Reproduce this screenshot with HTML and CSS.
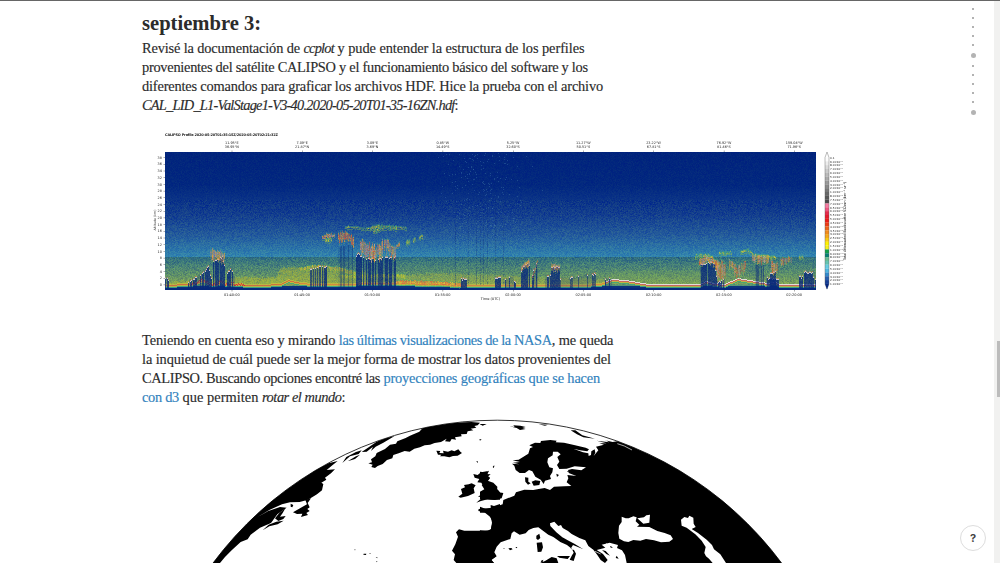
FILE: index.html
```html
<!DOCTYPE html>
<html lang="es">
<head>
<meta charset="utf-8">
<title>Bitácora</title>
<link rel="stylesheet" href="styles.css">
</head>
<body>
<main class="article">
  <h2 class="title">septiembre 3:</h2>
  <p class="para">
    <span class="line l1">Revisé la documentación de <em>ccplot</em><span class="rest"> y pude entender la estructura de los perfiles</span></span>
    <span class="line l2">provenientes del satélite CALIPSO y el funcionamiento básico del software y los</span>
    <span class="line l3">diferentes comandos para graficar los archivos HDF. Hice la prueba con el archivo</span>
    <span class="line l4"><em>CAL_LID_L1-ValStage1-V3-40.2020-05-20T01-35-16ZN.hdf</em>:</span>
  </p>
  <figure class="profile">
    <canvas id="plot" class="plot" width="651" height="138"></canvas>
    <svg id="axes" class="axes" viewBox="142 125 716 180" width="716" height="180"></svg>
  </figure>
  <p class="para second">
    <span class="line m1">Teniendo en cuenta eso y mirando <a>las últimas visualizaciones de la NASA</a>, me queda</span>
    <span class="line m2">la inquietud de cuál puede ser la mejor forma de mostrar los datos provenientes del</span>
    <span class="line m3">CALIPSO. Buscando opciones encontré las <a>proyecciones geográficas que se hacen</a></span>
    <span class="line m4"><a>con d3</a> que permiten <em>rotar el mundo</em>:</span>
  </p>
  <svg class="globe" viewBox="200 410 600 153" width="600" height="153">
    <defs><clipPath id="disc"><circle cx="497.3" cy="774.5" r="354.3"/></clipPath></defs>
    <g clip-path="url(#disc)">
      <g transform="translate(200 410) scale(.33333)">
        <path d="M20 470L60 459 75 441 95 421 122 396 143 388 152 374 180 353 213 339 232 313 260 293 240 291 205 303 173 321 208 300 246 283 270 277 299 276 324 269 351 253 366 241 370 222 364 218 379 209 375 203 393 190 405 178 380 180 398 165 413 153 385 160 350 177 300 207 240 246 215 262 180 280 90 360 10 440Z"/>
        <path d="M225 325L238 309 256 295 248 309 240 320 257 318 250 327 235 333ZM188 361L206 344 229 335 251 332 233 343 208 349ZM272 281L280 285 277 292 272 290ZM279 307L300 295 321 283 316 270 333 265 323 279 329 292 322 297 329 303 319 309 324 315 303 321 307 311 291 312Z"/>
        <path d="M232 265L280 227 330 195 380 170 335 201 290 230 248 258ZM427 159L439 141 468 126 485 121 476 132 450 139ZM443 154L468 139 480 134 465 147ZM485 126L506 112 530 95 555 85 584 78 550 98 527 110 513 123 519 110 500 125Z"/>
        <path d="M505 160L516 157 513 148 526 139 530 129 555 117 570 104 588 101 592 94 617 84 630 77 658 65 668 54 710 44 762 38 814 36 840 38 833 46 823 48 829 53 812 56 820 61 803 64 800 72 783 73 785 79 765 82 768 89 755 87 750 95 735 94 740 86 723 96 704 99 690 104 674 106 660 112 643 116 629 125 614 123 596 130 580 135 577 145 561 150 548 162 533 168 525 174 514 171 518 164Z"/>
        <path d="M709 122L721 123 718 129 731 130 729 122 744 125 755 121 763 124 775 118 781 125 786 129 773 137 759 138 748 142 733 139 720 139 724 134 714 134ZM840 43L857 42 845 45ZM838 88L845 88 840 92ZM829 154L833 153 833 160ZM878 171L883 165 881 174Z"/>
        <path d="M833 195L843 187 861 184 857 192 872 193 861 202 870 204 862 215 880 222 887 233 895 241 900 247 900 269 882 269 863 268 843 273 829 278 842 267 854 264 845 261 834 260 847 251 842 247 859 243 858 233 850 229 844 218 832 217 838 207 824 203 820 192ZM783 237L795 232 792 225 806 223 815 220 827 226 821 235 824 249 804 258 782 263 775 260 787 251Z"/>
        <path d="M900 282L882 288 872 285 872 294 860 295 836 297 835 303 849 306 862 309 873 323 876 338 872 361 835 362 793 362 777 358 768 367 774 380 766 403 756 422 765 433 761 450 769 459H882L874 449 888 439 876 424 886 410 900 396ZM464 417L467 420 464 421ZM491 431L499 431 498 435 490 434ZM509 429L513 430 509 432ZM527 441L532 442 532 445ZM528 454L532 454 531 457Z"/>
      </g>
      <g transform="translate(480 410) scale(.33333)">
        <path fill-rule="evenodd" d="M0 290L20 298 45 291 68 283 70 270 103 257 108 247 133 239 160 240 176 237 194 234 210 240 222 230 253 229 274 228 260 217 265 205 262 195 289 198 268 190 264 180 276 177 304 181 318 172 284 169 260 176 238 177 231 165 238 155 232 141 242 133 233 125 219 125 218 136 204 145 202 157 208 172 219 175 217 187 210 198 213 207 195 212 191 222 182 209 166 200 157 184 147 180 135 189 119 189 107 180 103 167 96 161 118 163 99 158 120 156 98 151 116 149 134 138 145 131 150 115 159 111 148 106 165 98 181 99 183 93 211 90 230 92 227 97 252 98 282 105 317 113 327 118 322 124 300 121 280 116 309 127 325 130 326 138 333 135 334 124 344 118 346 128 341 138 355 121 348 110 372 104 358 100 380 100 350 92 388 97 375 91 398 96 412 94 450 90 600 150 800 260 950 375 1100 540H0ZM0 308L15 308 30 320 38 335 33 357 21 364 0 361ZM50 410L62 397 91 387 95 370 102 364 119 374 137 370 146 360 160 354 175 352 187 361 205 374 220 381 241 396 261 405 276 417 281 428 276 436 269 449 281 453 288 431 282 420 272 416 279 405 310 418 283 401 266 392 247 382 229 367 211 348 210 340 223 335 235 348 243 345 248 354 264 363 275 372 298 384 316 391 325 408 340 419 352 435 362 450 375 459 383 450 369 432 350 420 376 413 365 404 389 398 414 405 411 414 426 421 435 435 440 459H235L230 445 215 441 195 453 180 459H42L34 450 50 439 43 427ZM425 320L437 325 446 325 460 319 470 322 467 334 478 344 471 350 508 351 532 363 554 369 572 376 579 387 568 395 543 397 522 391 498 387 481 392 460 390 445 396 432 394 418 386 415 369 417 347 425 336ZM472 325L492 322 499 316 510 314 508 338 490 341ZM603 329L613 321 624 324 628 317 640 323 641 341 647 351 635 357 654 369 680 389 696 405 702 418 721 433 738 459H698L687 446 678 439 673 429 677 411 665 392 646 373 620 353 605 347Z"/>
        <path d="M0 185L14 187 27 182 21 196 30 203 23 212 40 218 52 230 51 246 70 249 65 265 45 270 0 267V245L13 238 5 225 17 216 0 212ZM-1 42L20 42 8 47ZM88 49L104 51 100 46 121 47 137 51 127 54 137 57 120 60 110 54ZM176 43L204 44 195 47ZM272 61L286 61 307 76 345 86 310 82 291 73ZM135 202L145 203 145 215 152 220 144 224 136 215ZM155 215L166 211 181 213 178 225 161 227ZM229 191L237 195 231 201ZM260 184L273 184 270 190ZM169 377L178 371 181 384 174 390 169 386ZM170 398L186 397 189 412 184 425 173 426ZM85 415L94 414 98 418 90 421ZM106 411L112 411 110 415ZM70 415L74 415 72 418ZM231 438L270 438 263 447 238 443ZM366 420L377 423 390 437 379 432ZM410 437L416 446 407 444ZM390 408L399 412 392 414ZM182 453L190 449 187 460ZM41 169L44 170 39 173Z"/>
        <path class="shore" d="M412 101L433 108 456 120M357 81L382 93M150 200L158 209M205 214L206 225M379 400L430 456M345 424L362 432M60 455L76 451"/>
      </g>
    </g>
    <circle class="rim" cx="497.3" cy="774.5" r="354.3"/>
  </svg>
</main>
<nav class="outline"><i></i><i></i><i></i><i></i><i></i><b></b><i></i><i></i><i></i><i></i><i></i><b></b></nav>
<div class="scroll"><div class="thumb"></div></div>
<button class="help">?</button>
<script src="plot.js"></script>
</body>
</html>
```
FILE: styles.css
```css
* { box-sizing: border-box; }
html, body { height: 100%; overflow: hidden; }
body { margin: 0; background: #fff; color: #2b2b2b; border-top: 1px solid #666; font-family: "Source Serif Pro", "Liberation Serif", serif; }
.article { width: 716px; margin-left: 142px; }
.title { margin: 0; padding-top: 8px; height: 38px; font-size: 20.6px; line-height: 28px; font-weight: 700; }
.para { margin: 0; font-size: 14.4px; line-height: 19px; -webkit-text-stroke: .15px; }
.line { display: block; white-space: nowrap; }
.l1 { letter-spacing: -.15px; }
.l1 em { letter-spacing: -.75px; }
.rest { letter-spacing: -.08px; }
.l2 { letter-spacing: -.27px; }
.l3 { letter-spacing: -.18px; }
.l4 { letter-spacing: -.77px; }
.m1 { letter-spacing: -.11px; }
.m1 a { letter-spacing: -.38px; }
.m2 { letter-spacing: -.11px; }
.m3 { letter-spacing: -.34px; }
.m3 a { letter-spacing: -.17px; }
.m4 { letter-spacing: .02px; }
.m4 a { letter-spacing: -.3px; }
.m4 em { letter-spacing: -.45px; }
.para a { color: #3182bd; }
.profile { position: relative; margin: 10px 0 0; height: 180px; padding: 27px 0 0 23px; }
.plot { display: block; width: 651px; height: 138px; }
.axes { position: absolute; left: 0; top: 0; font-family: "DejaVu Sans", sans-serif; }
.second { padding-top: 26px; }
.globe { display: block; margin: 3px 0 0 58px; }
.rim { fill: none; stroke: #000; stroke-width: .8; }
.shore { fill: none; stroke: #fff; stroke-width: 2; }
.outline { position: absolute; left: 970px; top: 8px; width: 6px; display: flex; flex-direction: column; align-items: center; gap: 7px; }
.outline i { width: 2px; height: 2px; border-radius: 50%; background: #999; }
.outline b { width: 5px; height: 5px; border-radius: 50%; background: #b3b3b3; }
.scroll { position: absolute; right: 0; top: 1px; bottom: 0; width: 6px; background: #f1f1f0; padding: 340px 0 0 3px; }
.thumb { height: 56px; background: #bcbcbc; }
.help { position: absolute; left: 960px; top: 525px; width: 26px; height: 26px; padding: 0; border: 1px solid #ddd; border-radius: 50%; background: #fff; color: #444; font: bold 11px/24px Inter, sans-serif; }
```
FILE: plot.js
```js
const W = 651, H = 138, X0 = 165, Y0 = 152;
let seed = 7;
const rnd = () => (seed = (seed * 1664525 + 1013904223) >>> 0) / 4294967296;
const hex = s => [1, 3, 5].map(i => parseInt(s.substr(i, 2), 16));
const px = new Float32Array(W * H * 3);

function put(x, y, c, a = 1) {
  x = Math.round(x - X0); y = Math.round(y - Y0);
  if (x < 0 || y < 0 || x >= W || y >= H) return;
  const k = (y * W + x) * 3;
  for (let i = 0; i < 3; i++) px[k + i] += (c[i] - px[k + i]) * a;
}
function along(pts, x) {
  for (let i = 1; i < pts.length; i++) if (x <= pts[i][0]) {
    const [a, b] = pts[i - 1], [c, d] = pts[i];
    return b + (d - b) * (x - a) / (c - a);
  }
  return pts[pts.length - 1][1];
}
function ramp(stops, y) {
  for (let i = 1; i < stops.length; i++) if (y <= stops[i][0]) {
    const t = (y - stops[i - 1][0]) / (stops[i][0] - stops[i - 1][0]);
    const a = hex(stops[i - 1][1]), b = hex(stops[i][1]);
    return a.map((v, k) => v + (b[k] - v) * t);
  }
  return hex(stops[stops.length - 1][1]);
}

// Background atmosphere
const sky = [[152, '#00247c'], [185, '#02287f'], [215, '#143f8e'], [235, '#245b9b'], [256.4, '#3284ae'],
  [256.6, '#2f6d80'], [265, '#467f78'], [275, '#609168'], [283, '#7ca05a'], [287, '#2d8790'], [288, '#06297c'], [290, '#00206c']];
for (let y = Y0; y < Y0 + H; y++) {
  const c = ramp(sky, y), n = y < 200 ? 5 : y < 257 ? 12 : y < 285 ? 18 : 5;
  for (let x = X0; x < X0 + W; x++) {
    const r = (rnd() + rnd() - 1) * n * 1.4;
    put(x, y, [c[0] + r, c[1] + r * 1.2, c[2] - r * .3]);
  }
}
// Daylight speckle
for (let i = 0; i < 300; i++) put(485 + (rnd() + rnd() + rnd() - 1.5) * 42, 153 + rnd() * 105, hex('#4b85b0'), .35);
const navy = hex('#08297b'), white = hex('#eee5e5');
const green = ['#82b83e', '#d8cf30', '#4cac70', '#c9cb2c'].map(hex);
const hot = ['#dd6133', '#eb9d33', '#bfa28c', '#ce8778', '#d0a038'].map(hex);
const pick = a => a[Math.floor(rnd() * a.length)];

// Columns share a colour so that the echoes read as vertical streaks
function cloud(pts, thick, pal, density) {
  for (let x = pts[0][0]; x <= pts[pts.length - 1][0]; x++) {
    const h = thick * (.5 + rnd() * .8), y = along(pts, x) + (rnd() - .5) * thick * .35;
    const c = pick(pal), a = density + (1 - density) * rnd();
    put(x, y - h * .3 - 1, green[2], .4);
    for (let d = 0; d < h; d++) put(x, y + d - h * .3, rnd() < .65 ? c : pick(pal), a * (.45 + rnd() * .5));
    put(x, y + h * .7 + 1, green[0], .4);
  }
}
function towers(pts, density, cap = true, alpha = .9) {
  for (let x = pts[0][0]; x <= pts[pts.length - 1][0]; x++) {
    const full = rnd() < density;
    const y = along(pts, x) + rnd() * 2;
    const a = full ? alpha : alpha * .3;
    for (let q = y; q < 289; q++) put(x, q, navy, a * (.75 + rnd() * .25));
    if (cap && full) { put(x, y, white, .8); put(x, y - 1, pick(hot), .6); }
  }
}
function haze(top, bottom, color, a) {
  for (let x = top[0][0]; x <= top[top.length - 1][0]; x++)
    for (let y = along(top, x) + rnd() * 2; y < bottom; y++) put(x, y, hex(color), a * (.25 + rnd() * .75));
}
haze([[165, 281], [225, 279], [240, 276], [275, 277], [281, 267], [315, 266], [340, 268], [365, 271]], 285, '#b9bb2c', .6);
haze([[365, 273], [405, 274], [440, 272], [550, 277], [610, 279]], 285, '#a9b341', .5);
haze([[610, 270], [700, 270]], 284, '#80ac50', .25);
cloud([[300, 268], [315, 266], [338, 268], [356, 273]], 3, [hex('#d0c92c'), hex('#a5bd38'), hex('#d9b932')], .3);
cloud([[340, 276], [380, 275], [405, 275]], 3, [hex('#c9cb2c'), hex('#a5bd38')], .4);

// Ground echo
const ground = [[165, 285], [188, 284], [196, 283], [202, 280], [209, 284], [217, 284], [221, 281], [225, 284], [260, 285],
  [280, 284], [288, 280], [295, 282], [310, 284], [400, 283], [430, 284], [470, 285], [580, 285], [600, 284], [612, 280],
  [626, 281], [648, 285], [699, 285], [705, 282], [714, 284], [724, 285], [738, 279], [750, 281], [767, 284], [775, 282], [779, 285], [816, 285]];
for (let x = X0; x < X0 + W; x++) {
  const y = along(ground, x), strong = x > 604;
  put(x, y - 1, strong ? white : hex('#d8c33d'), strong ? .9 : .6);
  put(x, y, hex(strong ? '#d8605c' : x < 300 ? '#db683b' : '#e2853c'), .85);
  put(x, y + 1, hex('#d2b83a'), .8);
  put(x, y + 2, hex('#3ca77e'), .8);
  for (let q = Math.max(y + 3, 286); q < 291; q++) put(x, q, navy, .9);
  if (x < 245 && x > 190) put(x, y + rnd() * 3 - 2, hex('#d81c30'), .8);
}
cloud([[395, 281], [430, 282], [460, 284]], 3, ['#e9843a', '#e7b936', '#dc6843'].map(hex), .7);

// Attenuated columns
towers([[165, 276], [168, 278]], .8);
towers([[188, 281], [194, 277], [199, 274], [202, 272], [205, 269], [208, 265], [211, 277]], .6);
towers([[213, 260], [217, 258], [222, 256], [224, 263]], .75);
towers([[227, 272], [229, 269], [231, 268], [234, 276]], .65);
towers([[310, 268], [317, 266], [320, 266]], .6, true, .75);
towers([[322, 266], [326, 265]], .95);
towers([[338, 246], [352, 244]], .35, false, .5);
towers([[356, 255], [358, 252], [361, 255]], .95);
towers([[363, 257], [375, 258], [382, 257], [395, 256]], .6);
towers([[461, 278], [466, 278]], 1);
for (const x of [455, 468, 476, 480, 483, 487, 495, 503]) for (let y = 190; y < 285; y++) put(x, y, navy, .4 * rnd());
towers([[495, 277], [500, 276]], 1); towers([[505, 279], [510, 275], [515, 280]], .5);
towers([[521, 269], [525, 262], [529, 264]], .85); towers([[532, 274], [535, 263], [537, 261]], .6);
towers([[545, 278], [550, 273]], .3); towers([[551, 267], [555, 265], [559, 267]], .9);
towers([[560, 278], [577, 276], [586, 273], [595, 273]], .28, true, .7); towers([[605, 277], [611, 277]], .4);
towers([[700, 262], [714, 262], [716, 275]], .8); towers([[717, 280], [724, 279]], .3);
towers([[755, 264], [763, 263]], .55, false, .6); towers([[766, 277], [778, 278]], .7);
towers([[770, 272], [775, 270]], .8); towers([[799, 275], [802, 276]], .7); towers([[804, 271], [812, 271]], 1); towers([[813, 277], [816, 278]], .8);

// Clouds
cloud([[322, 237], [326, 235], [334, 235]], 3, hot, .85); cloud([[325, 240], [331, 239]], 3, green, .4);
cloud([[338, 236], [347, 234], [353, 240]], 9, hot.slice(0, 2), .7);
cloud([[345, 227], [355, 227], [365, 229], [370, 228]], 1, green, .3);
cloud([[370, 228], [377, 226], [390, 227], [396, 227]], 3, green, .6); cloud([[396, 227], [406, 228]], 1, green, .3); cloud([[373, 231], [382, 228]], 2, green, .4);
cloud([[360, 244], [368, 249], [375, 250], [382, 245]], 14, hot, .5);
cloud([[384, 242], [388, 242], [390, 248], [395, 250]], 11, hot, .5);
cloud([[396, 246], [399, 243]], 3, hot, .5); cloud([[406, 242], [409, 241]], 4, green, .6); cloud([[413, 239], [415, 239]], 3, green, .5); cloud([[419, 237], [422, 236]], 3, green, .6);
cloud([[210, 252], [217, 253], [224, 256]], 9, hot.slice(1), .4);
cloud([[521, 268], [525, 263], [529, 262]], 6, hot.slice(1), .6); cloud([[532, 276], [537, 261]], 4, hot, .6);
cloud([[551, 266], [559, 266]], 7, hot.slice(1), .5);
cloud([[695, 256], [700, 255], [711, 256], [716, 262], [720, 266]], 3, green, .4);
cloud([[699, 261], [704, 258], [711, 259], [715, 262], [719, 274]], 6, hot, .8);
cloud([[716, 265], [722, 268], [725, 266]], 16, hot, .4);
cloud([[719, 253], [730, 252], [731, 254]], 2, green, .5); cloud([[729, 261], [737, 270], [745, 263]], 9, hot, .4);
cloud([[740, 252], [748, 250], [754, 255], [775, 257]], 2, green, .8);
cloud([[752, 257], [761, 258], [768, 257]], 7, hot, .6); cloud([[771, 264], [777, 266]], 12, hot, .4);
cloud([[780, 260], [791, 258]], 6, hot, .3); cloud([[799, 257], [803, 257]], 2, green, .4);
const ctx = document.getElementById('plot').getContext('2d');
const img = ctx.createImageData(W, H);
for (let i = 0; i < W * H; i++) {
  for (let k = 0; k < 3; k++) img.data[i * 4 + k] = px[i * 3 + k];
  img.data[i * 4 + 3] = 255;
}
ctx.putImageData(img, 0, 0);

// Axes, labels and colour bar
let out = '';
const text = (x, y, s, size, anchor = 'middle', extra = '') =>
  out += `<text x="${x}" y="${y}" font-size="${size}" text-anchor="${anchor}" fill="#222" ${extra}>${s}</text>`;
const box = (x, y, w, h, f) => out += `<rect x="${x}" y="${y}" width="${w}" height="${h}" fill="${f}"/>`;
text(165, 136.3, 'CALIPSO Profile 2020-05-20T01:35:15Z/2020-05-20T02:21:32Z', 3.5, 'start', 'font-weight="bold" textLength="113"');
const top2 = [['11.95°E', '36.95°N'], ['7.09°E', '21.87°N'], ['3.09°E', '3.69°N'], ['0.85°W', '14.49°S'], ['5.25°W', '32.60°S'],
  ['11.27°W', '50.51°S'], ['23.22°W', '67.81°S'], ['76.92°W', '81.46°S'], ['159.04°W', '71.96°S']];
const times = ['01:40:00', '01:45:00', '01:50:00', '01:55:00', '02:00:00', '02:05:00', '02:10:00', '02:15:00', '02:20:00'];
top2.forEach((t, i) => {
  const x = 231.8 + i * 70.3;
  text(x, 144, t[0], 3.4); text(x, 147.8, t[1], 3.4); text(x, 295.6, times[i], 3.5);
  box(x, 150.5, .4, 1.5, '#333'); box(x, 290, .4, 1.5, '#333');
});
for (let i = 0; i < 20; i++) {
  text(161.8, 286 - i * 6.7, i * 2, 3.4, 'end'); box(163.5, 284.7 - i * 6.7, 1.5, .4, '#333');
}
text(490.5, 299.7, 'Time (UTC)', 3.5);
text(0, 0, 'Altitude (km)', 3.2, 'middle', 'transform="translate(156 220) rotate(-90)"');
const bar = [];
for (let i = 0; i < 12; i++) { const v = Math.round(252 - i * 16.5); bar.push(`rgb(${v},${v},${v})`); }
bar.push('#f47ba0', '#ee5580', '#e52c4d', '#e51c2c', '#ed1a16', '#ed3b16', '#ed641c', '#f28a1c', '#f5a71a', '#f9cb13', '#fff200', '#f6ef20',
  '#12a04b', '#087f74', '#69bd94', '#65c4b1', '#67cde2', '#4fb7e2', '#338bcc', '#255ead', '#173f96');
bar.forEach((c, i) => box(825, 157.5 + i * 3.83, 4, 3.9, c));
out += '<path d="M825 157.5L827 152L829 157.5V284L827 289L825 284Z" fill="none" stroke="#555" stroke-width=".4"/><path d="M825 284h4l-2 5.5z" fill="#07277c"/>';
const levels = ['0.1'];
for (let i = 9; i > 0; i--) levels.push(i + '.0×10⁻²');
for (let i = 16; i > 2; i--) levels.push((i / 2).toFixed(1) + '×10⁻³');
for (let i = 10; i > 0; i--) levels.push(i === 10 ? '1.0×10⁻³' : i + '.0×10⁻⁴');
levels.forEach((s, i) => text(830, 158.8 + i * 3.83, s, 2.8, 'start'));
text(0, 0, 'Total Attenuated Backscatter 532nm (km⁻¹ sr⁻¹)', 3.5, 'middle', 'textLength="79" transform="translate(846 221) rotate(-90)"');
document.getElementById('axes').innerHTML = out;
```
